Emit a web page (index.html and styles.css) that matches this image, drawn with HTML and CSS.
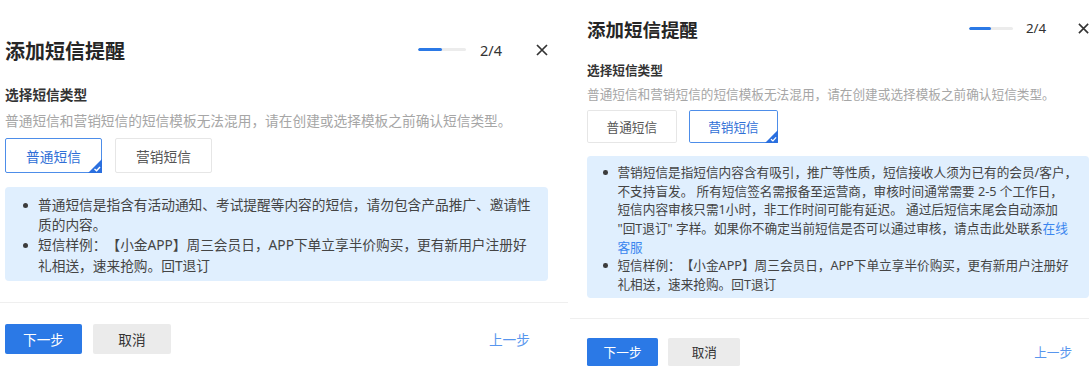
FILE: index.html
```html
<!DOCTYPE html>
<html lang="zh-CN">
<head>
<meta charset="utf-8">
<title>添加短信提醒</title>
<link rel="stylesheet" href="styles.css">
</head>
<body>
<div class="page">
  <section class="dialog dialog--a">
    <header class="dlg-head">
      <h2 class="dlg-title">添加短信提醒</h2>
      <div class="tools">
        <div class="progress"><span class="progress-fill" style="width:50%"></span></div>
        <span class="step">2/4</span>
        <button class="close" aria-label="关闭"><svg viewBox="0 0 12 12" width="12" height="12"><path d="M1 1L11 11M11 1L1 11" stroke="#333" stroke-width="1.7" fill="none"/></svg></button>
      </div>
    </header>
    <div class="dlg-body">
      <h3 class="sub">选择短信类型</h3>
      <p class="desc">普通短信和营销短信的短信模板无法混用，请在创建或选择模板之前确认短信类型。</p>
      <div class="types">
        <button class="type is-active">普通短信<span class="corner"><svg viewBox="0 0 14 14" width="14" height="14"><path d="M14 0V14H0Z" fill="#2a6fdf"/><path d="M6.5 10L8.6 11.8L12 8" stroke="#fff" stroke-width="1.4" fill="none"/></svg></span></button>
        <button class="type">营销短信</button>
      </div>
      <div class="tip">
        <ul class="tip-list">
          <li><span>普通短信是指含有活动通知、考试提醒等内容的短信，请勿包含产品推广、邀请性<br>质的内容。</span></li>
          <li><span>短信样例：【小金APP】周三会员日，APP下单立享半价购买，更有新用户注册好<br>礼相送，速来抢购。回T退订</span></li>
        </ul>
      </div>
    </div>
    <footer class="dlg-foot">
      <div class="actions">
        <button class="btn btn--primary">下一步</button>
        <button class="btn btn--ghost">取消</button>
      </div>
      <a class="prev">上一步</a>
    </footer>
  </section>

  <section class="dialog dialog--b">
    <header class="dlg-head">
      <h2 class="dlg-title">添加短信提醒</h2>
      <div class="tools">
        <div class="progress"><span class="progress-fill" style="width:50%"></span></div>
        <span class="step">2/4</span>
        <button class="close" aria-label="关闭"><svg viewBox="0 0 12 12" width="12" height="12"><path d="M1 1L11 11M11 1L1 11" stroke="#333" stroke-width="1.7" fill="none"/></svg></button>
      </div>
    </header>
    <div class="dlg-body">
      <h3 class="sub">选择短信类型</h3>
      <p class="desc">普通短信和营销短信的短信模板无法混用，请在创建或选择模板之前确认短信类型。</p>
      <div class="types">
        <button class="type">普通短信</button>
        <button class="type is-active">营销短信<span class="corner"><svg viewBox="0 0 14 14" width="14" height="14"><path d="M14 0V14H0Z" fill="#2a6fdf"/><path d="M6.5 10L8.6 11.8L12 8" stroke="#fff" stroke-width="1.4" fill="none"/></svg></span></button>
      </div>
      <div class="tip">
        <ul class="tip-list">
          <li><span>营销短信是指短信内容含有吸引，推广等性质，短信接收人须为已有的会员/客户，<br>不支持盲发。 所有短信签名需报备至运营商，审核时间通常需要 2-5 个工作日，<br>短信内容审核只需1小时，非工作时间可能有延迟。 通过后短信末尾会自动添加<br>"回T退订" 字样。如果你不确定当前短信是否可以通过审核，请点击此处联系<a class="link">在线<br>客服</a></span></li>
          <li><span>短信样例：【小金APP】周三会员日，APP下单立享半价购买，更有新用户注册好<br>礼相送，速来抢购。回T退订</span></li>
        </ul>
      </div>
    </div>
    <footer class="dlg-foot">
      <div class="actions">
        <button class="btn btn--primary">下一步</button>
        <button class="btn btn--ghost">取消</button>
      </div>
      <a class="prev">上一步</a>
    </footer>
  </section>
</div>
</body>
</html>
```

FILE: styles.css
```css
html, body {
  margin: 0;
  padding: 0;
  background: #fff;
}
body {
  font-family: "Noto Sans", "Noto Sans CJK SC", sans-serif;
  color: #333;
  overflow: hidden;
  text-spacing-trim: space-all;
}
.page {
  display: flex;
  gap: 2px;
  width: 1089px;
  height: 373px;
  overflow: hidden;
}
.dialog {
  flex: none;
  width: 568px;
}
.dialog--b {
  zoom: 0.924;
  width: 581.4px;
}

/* header */
.dlg-head {
  display: flex;
  align-items: center;
  justify-content: space-between;
  height: 28px;
  padding: 37px 20px 0 5px;
}
.dialog--b .dlg-head {
  padding-top: 18.5px;
}
.dialog--b .dlg-head,
.dialog--b .dlg-body,
.dialog--b .dlg-foot {
  padding-left: 18.4px;
}
.dlg-title {
  margin: 0;
  font-size: 20px;
  line-height: 28px;
  font-weight: 700;
  color: #262626;
  font-family: "Noto Sans CJK SC", sans-serif;
}
.tools {
  display: flex;
  align-items: center;
  margin-top: -3px;
}
.progress {
  width: 48px;
  height: 3px;
  border-radius: 2px;
  background: #ececec;
  margin-right: 14px;
  overflow: hidden;
}
.progress-fill {
  display: block;
  height: 100%;
  background: #2b79e6;
  border-radius: 2px;
}
.step {
  font-size: 14.5px;
  line-height: 20px;
  color: #333;
  margin-right: 34px;
}
.close {
  display: block;
  width: 12px;
  height: 12px;
  padding: 0;
  border: 0;
  background: none;
}
.close svg {
  display: block;
}

/* body */
.dlg-body {
  padding: 0 20px 0 5px;
}
.sub {
  margin: 19px 0 0;
  font-size: 13.7px;
  line-height: 20px;
  font-weight: 700;
  color: #333;
  font-family: "Noto Sans CJK SC", sans-serif;
}
.desc {
  margin: 6px 0 0;
  font-size: 13.7px;
  line-height: 20px;
  color: #a6a6a6;
  font-family: "Noto Sans CJK SC", sans-serif;
}
.types {
  display: flex;
  gap: 13px;
  margin-top: 8px;
}
.type {
  position: relative;
  width: 97px;
  height: 35px;
  padding: 0;
  border: 1px solid #e6e6e6;
  border-radius: 2px;
  background: #fff;
  font-family: "Noto Sans CJK SC", sans-serif;
  font-size: 13.7px;
  color: #555;
}
.type.is-active {
  border-color: #4d8de9;
  color: #2f6fd6;
}
.corner {
  position: absolute;
  right: -1px;
  bottom: -1px;
  width: 14px;
  height: 14px;
}
.corner svg {
  display: block;
}

.tip {
  margin-top: 14px;
  padding: 8px 10px 5px 17.5px;
  background: #e0effe;
  border-radius: 4px;
}
.tip-list {
  margin: 0;
  padding: 0;
  list-style: none;
}
.tip-list li {
  display: grid;
  grid-template-columns: 15.5px 1fr;
  font-size: 13.7px;
  line-height: 20.2px;
  color: #444;
  white-space: nowrap;
}
.tip-list li::before {
  content: "";
  width: 5px;
  height: 5px;
  margin-top: 7.6px;
  border-radius: 50%;
  background: #3c3c3c;
}
.link {
  color: #3a86ef;
}

/* footer */
.dlg-foot {
  display: flex;
  align-items: center;
  justify-content: space-between;
  margin-top: 21px;
  padding: 21px 20px 0 5px;
  border-top: 1px solid #efefef;
}
.actions {
  display: flex;
  gap: 11px;
}
.btn {
  width: 77px;
  height: 30px;
  padding: 0;
  border: 0;
  border-radius: 2px;
  font-family: "Noto Sans CJK SC", sans-serif;
  font-size: 13.7px;
}
.btn--primary {
  background: #2b79e6;
  color: #fff;
}
.btn--ghost {
  width: 78px;
  background: #ebebeb;
  color: #333;
}
.prev {
  margin-right: 18px;
  font-family: "Noto Sans CJK SC", sans-serif;
  font-size: 13.7px;
  color: #5896ee;
}
```
